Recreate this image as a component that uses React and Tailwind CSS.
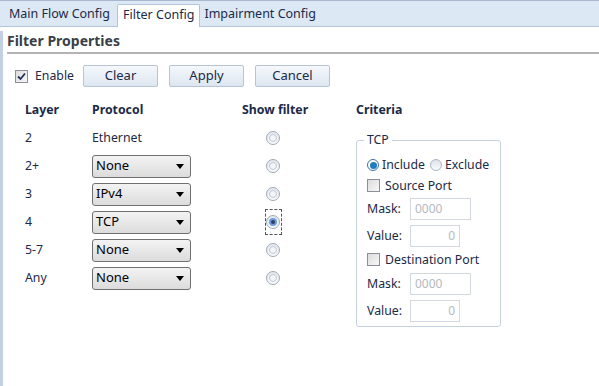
import React from "react";

const rows = [
  { layer: "2", proto: null, label: "Ethernet" },
  { layer: "2+", proto: "None" },
  { layer: "3", proto: "IPv4" },
  { layer: "4", proto: "TCP", checked: true },
  { layer: "5-7", proto: "None" },
  { layer: "Any", proto: "None" },
];

const Radio = ({ checked }) => (
  <span className="inline-flex h-[14px] w-[14px] items-center justify-center rounded-full border border-[#9ea8b8] bg-gradient-to-b from-[#e3e7ed] to-[#fafbfc]">
    <span
      className={
        checked
          ? "h-[8px] w-[8px] rounded-full border-2 border-[#6c9be0] bg-[#2e3f5e]"
          : "h-[8px] w-[8px] rounded-full border border-[#c2c9d4] bg-[#f4f5f7]"
      }
    />
  </span>
);

const Select = ({ value }) => (
  <div className="flex h-[23px] w-[99px] items-center justify-between rounded-[3px] border border-[#707070] bg-gradient-to-b from-[#f3f3f3] to-[#dcdcdc] pl-[3px] pr-[6px] text-[13px] text-black">
    <span>{value}</span>
    <span className="h-0 w-0 border-x-[4px] border-t-[5px] border-x-transparent border-t-black" />
  </div>
);

const Check = ({ checked }) => (
  <span className="inline-flex h-[13px] w-[13px] items-center justify-center border border-[#8a8f99] bg-gradient-to-br from-[#dcdcdc] to-[#f8f8f8]">
    {checked && (
      <svg width="9" height="9" viewBox="0 0 9 9">
        <path d="M1 4.5 L3.5 7 L8 1.5" stroke="#1f2f5a" strokeWidth="1.8" fill="none" />
      </svg>
    )}
  </span>
);

const Btn = ({ children }) => (
  <button className="h-[22px] w-[75px] rounded-[2px] border border-[#b6c4d6] bg-gradient-to-b from-[#f5f8fc] to-[#dde6f0] text-[13px] text-[#1b2a47]">
    {children}
  </button>
);

const Field = ({ label, value, w }) => (
  <div className="flex h-[27px] items-center">
    <span className="w-[43px] text-[#1b2a47]">{label}</span>
    <div
      className={`flex h-[22px] items-center border border-[#d3d8df] px-[4px] text-[12px] text-[#b4b9c1] ${w}`}
    >
      {value}
    </div>
  </div>
);

export default function App() {
  return (
    <div
      className="h-[386px] w-[599px] overflow-hidden bg-white text-[12.3px] text-[#1b2a47]"
      style={{ fontFamily: '"Noto Sans", "Open Sans", sans-serif' }}
    >
      <div className="flex h-[27px] items-end border-t border-b border-t-[#a9b8cf] border-b-[#b4c4da] bg-[#dde8f5] pl-[2px] text-[12.5px]">
        <div className="px-[7px] pb-[2px] leading-[20px]">Main Flow Config</div>
        <div className="-mb-px rounded-t-[2px] border border-b-0 border-[#b4c4da] bg-white px-[5px] pb-[2px] leading-[20px]">
          Filter Config
        </div>
        <div className="px-[4px] pb-[2px] leading-[20px]">Impairment Config</div>
      </div>
      <div className="h-[359px] border-l-[3px] border-[#c3d0e3] pl-[4px]">
        <div className="mt-[4px] border-b-2 border-[#b4b4b4] pb-[1px] text-[14px] leading-[20px] font-bold text-[#3a3f48]">
          Filter Properties
        </div>
        <div className="mt-[11px] flex items-center pl-[8px]">
          <Check checked />
          <span className="ml-[7px] w-[48px]">Enable</span>
          <div className="flex gap-[11px]">
            <Btn>Clear</Btn>
            <Btn>Apply</Btn>
            <Btn>Cancel</Btn>
          </div>
        </div>
        <div className="mt-[13px] flex">
          <div className="w-[349px]">
            <div className="flex h-[20px] items-center font-bold text-[#1b2a47]">
              <span className="w-[67px] pl-[18px]">Layer</span>
              <span className="w-[150px] pl-[18px]">Protocol</span>
              <span className="pl-[18px]">Show filter</span>
            </div>
            <div className="mt-[4px]">
              {rows.map((r) => (
                <div key={r.layer} className="flex h-[28px] items-center">
                  <span className="w-[85px] pl-[18px]">{r.layer}</span>
                  <div className="w-[166px]">
                    {r.proto ? <Select value={r.proto} /> : <span>{r.label}</span>}
                  </div>
                  <div className="flex w-[30px] justify-center">
                    {r.checked ? (
                      <span className="flex h-[26px] w-[17px] items-center justify-center border border-dashed border-[#555]">
                        <Radio checked />
                      </span>
                    ) : (
                      <Radio />
                    )}
                  </div>
                </div>
              ))}
            </div>
          </div>
          <div>
            <div className="flex h-[20px] items-center font-bold">Criteria</div>
            <fieldset className="mt-[11px] w-[145px] min-w-0 rounded-[3px] border border-[#c4d0e0] px-[10px] pb-[2px]">
              <legend className="-ml-[3px] px-[3px]">TCP</legend>
              <div className="mt-[5px] flex h-[22px] items-center gap-[3px]">
                <span className="inline-flex h-[12px] w-[12px] items-center justify-center rounded-full border border-[#3b6fa8] bg-white">
                  <span className="h-[7px] w-[7px] rounded-full bg-[#1f7bc0]" />
                </span>
                <span>Include</span>
                <span className="ml-[2px] inline-flex h-[12px] w-[12px] rounded-full border border-[#a9b3c3] bg-gradient-to-b from-[#dfe3e8] to-[#fafbfc]" />
                <span>Exclude</span>
              </div>
              <div className="flex h-[19px] items-center gap-[5px]">
                <Check />
                <span>Source Port</span>
              </div>
              <Field label="Mask:" value="0000" w="w-[61px]" />
              <Field label="Value:" value={<span className="ml-auto">0</span>} w="w-[50px]" />
              <div className="flex h-[21px] items-center gap-[5px]">
                <Check />
                <span>Destination Port</span>
              </div>
              <Field label="Mask:" value="0000" w="w-[61px]" />
              <Field label="Value:" value={<span className="ml-auto">0</span>} w="w-[50px]" />
            </fieldset>
          </div>
        </div>
      </div>
    </div>
  );
}
